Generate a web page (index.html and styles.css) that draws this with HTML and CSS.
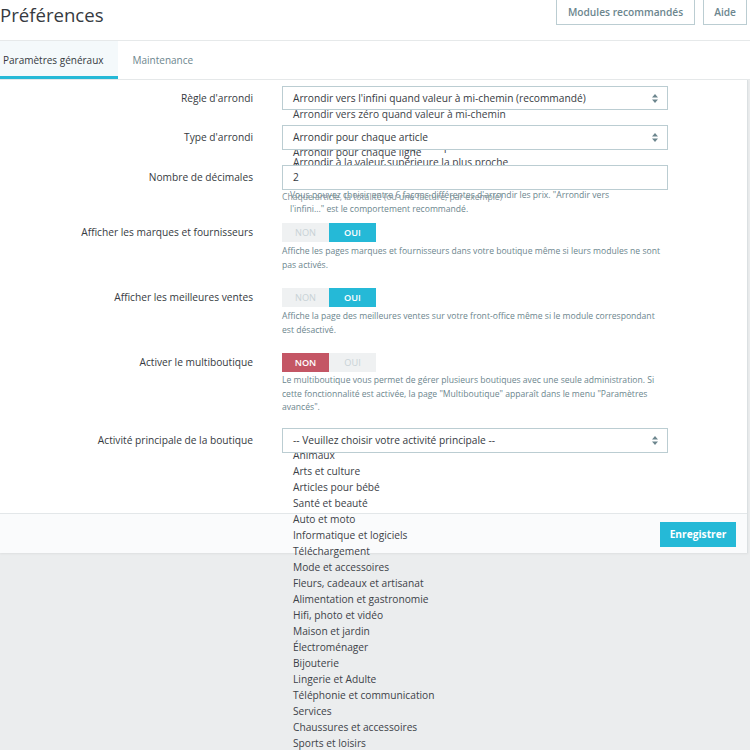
FILE: index.html
```html
<!DOCTYPE html>
<html lang="fr">
<head>
<meta charset="utf-8">
<title>Préférences</title>
<link rel="stylesheet" href="styles.css">
</head>
<body>
<header class="head">
  <div class="titlebar">
    <h1 class="title">Préférences</h1>
    <div class="tools">
      <button class="tool-btn">Modules recommandés</button>
      <button class="tool-btn">Aide</button>
    </div>
  </div>
  <nav class="tabs">
    <a class="tab active">Paramètres généraux</a>
    <a class="tab">Maintenance</a>
  </nav>
</header>

<main class="panel">
  <div class="form">
    <div class="row r1">
      <label class="lbl">Règle d'arrondi</label>
      <div class="ctl">
        <div class="select">Arrondir vers l'infini quand valeur à mi-chemin (recommandé)<svg class="caret" width="6" height="9" viewBox="0 0 6 9"><path d="M3 0 L6 3.5 H0 Z M3 9 L6 5.5 H0 Z" fill="#6c868e"/></svg></div>
        <ul class="opts">
          <li>Arrondir vers zéro quand valeur à mi-chemin</li>
          <li>Arrondir vers la valeur paire quand valeur à mi-chemin</li>
          <li>Arrondir vers la valeur impaire quand valeur à mi-chemin</li>
          <li>Arrondir à la valeur supérieure la plus proche</li>
          <li>Arrondir à la valeur inférieure la plus proche</li>
        </ul>
      </div>
    </div>

    <div class="row r2">
      <label class="lbl">Type d'arrondi</label>
      <div class="ctl">
        <div class="select">Arrondir pour chaque article<svg class="caret" width="6" height="9" viewBox="0 0 6 9"><path d="M3 0 L6 3.5 H0 Z M3 9 L6 5.5 H0 Z" fill="#6c868e"/></svg></div>
        <ul class="opts">
          <li>Arrondir pour chaque ligne</li>
          <li>Arrondir sur le total</li>
        </ul>
      </div>
    </div>

    <div class="row r3">
      <label class="lbl">Nombre de décimales</label>
      <div class="ctl">
        <div class="input">2</div>
        <div class="stack-help">
          <p class="sh sh-a">Vous pouvez choisir entre 6 façons différentes d'arrondir les prix. "Arrondir vers<br>l'infini..." est le comportement recommandé.</p>
          <p class="sh sh-b">Chaque article, la totalité (ou une facture, par exemple)</p>
        </div>
      </div>
    </div>

    <div class="row r4">
      <label class="lbl">Afficher les marques et fournisseurs</label>
      <div class="ctl">
        <div class="switch"><span class="sw-off">NON</span><span class="sw-on">OUI</span></div>
        <p class="help">Affiche les pages marques et fournisseurs dans votre boutique même si leurs modules ne sont pas activés.</p>
      </div>
    </div>

    <div class="row r5">
      <label class="lbl">Afficher les meilleures ventes</label>
      <div class="ctl">
        <div class="switch"><span class="sw-off">NON</span><span class="sw-on">OUI</span></div>
        <p class="help">Affiche la page des meilleures ventes sur votre front-office même si le module correspondant est désactivé.</p>
      </div>
    </div>

    <div class="row r6">
      <label class="lbl">Activer le multiboutique</label>
      <div class="ctl">
        <div class="switch"><span class="sw-no">NON</span><span class="sw-off">OUI</span></div>
        <p class="help help3">Le multiboutique vous permet de gérer plusieurs boutiques avec une seule administration. Si cette fonctionnalité est activée, la page "Multiboutique" apparaît dans le menu "Paramètres avancés".</p>
      </div>
    </div>

    <div class="row r7">
      <label class="lbl">Activité principale de la boutique</label>
      <div class="ctl">
        <div class="select">-- Veuillez choisir votre activité principale --<svg class="caret" width="6" height="9" viewBox="0 0 6 9"><path d="M3 0 L6 3.5 H0 Z M3 9 L6 5.5 H0 Z" fill="#6c868e"/></svg></div>
        <ul class="opts">
          <li>Animaux</li>
          <li>Arts et culture</li>
          <li>Articles pour bébé</li>
          <li>Santé et beauté</li>
          <li>Auto et moto</li>
          <li>Informatique et logiciels</li>
          <li>Téléchargement</li>
          <li>Mode et accessoires</li>
          <li>Fleurs, cadeaux et artisanat</li>
          <li>Alimentation et gastronomie</li>
          <li>Hifi, photo et vidéo</li>
          <li>Maison et jardin</li>
          <li>Électroménager</li>
          <li>Bijouterie</li>
          <li>Lingerie et Adulte</li>
          <li>Téléphonie et communication</li>
          <li>Services</li>
          <li>Chaussures et accessoires</li>
          <li>Sports et loisirs</li>
        </ul>
      </div>
    </div>
  </div>
  <div class="footer">
    <button class="save">Enregistrer</button>
  </div>
</main>
</body>
</html>
```

FILE: styles.css
```css
* { box-sizing: border-box; }
html { overflow: hidden; }
html, body { margin: 0; padding: 0; }
body {
  min-height: 750px;
  background: #ebedee;
  font-family: "Open Sans", "Noto Sans", sans-serif;
  color: #363a41;
}
.head { background: #fff; }
.titlebar {
  height: 41px;
  display: flex;
  justify-content: space-between;
  align-items: flex-start;
  border-bottom: 1px solid #e6e9ea;
}
.title {
  margin: 0;
  font-size: 18.6px;
  font-weight: 400;
  line-height: 30px;
  color: #363a41;
}
.tools { display: flex; gap: 8px; padding-right: 3px; margin-top: -1px; }
.tool-btn {
  height: 26px;
  border: 1px solid #bbcdd2;
  background: #fff;
  color: #6c868e;
  font-family: inherit;
  font-size: 10.2px;
  font-weight: 600;
  padding: 0 10px;
}
.tools .tool-btn:first-child { padding: 0 11px; }
.tabs {
  display: flex;
  height: 39px;
  margin-left: -12px;
  border-bottom: 1px solid #e6e9ea;
}
.tab {
  display: flex;
  align-items: center;
  padding: 0 14px 0 15px;
  font-size: 10px;
  color: #6c868e;
  border-bottom: 3px solid transparent;
  padding-top: 3px;
}
.tab.active {
  background: #f4f9fb;
  color: #363a41;
  border-bottom-color: #25b9d7;
}
.panel {
  width: 748px;
  background: #fff;
  border-right: 1px solid #dbe0e2;
  box-shadow: 0 1px 2px rgba(0,0,0,0.06);
}
.form { padding: 6px 0 60px; }
.row {
  display: grid;
  grid-template-columns: 253px 386px;
  column-gap: 29px;
  align-items: start;
}
.lbl {
  text-align: right;
  font-size: 10.2px;
  line-height: 24px;
  color: #363a41;
}
.ctl { position: relative; }
.select, .input {
  position: relative;
  z-index: 2;
  height: 24px;
  border: 1px solid #bbcdd2;
  background: #fff;
  font-size: 10.2px;
  line-height: 22px;
  padding: 0 10px;
  color: #363a41;
  white-space: nowrap;
}
.r2 .select, .r3 .input, .r7 .select { height: 25px; line-height: 23px; }
.caret { position: absolute; right: 9px; top: 7px; }
.opts {
  position: absolute;
  z-index: 1;
  left: 11px;
  top: 19px;
  margin: 0;
  padding: 0;
  list-style: none;
  font-size: 10.2px;
  line-height: 16px;
  color: #3d4248;
  white-space: nowrap;
}
.r1 .opts { top: 20px; }
.r2 { margin-top: 15px; }
.r3 { margin-top: 15px; }
.r3 .lbl, .r7 .lbl { line-height: 25px; }
.stack-help {
  position: absolute;
  z-index: 1;
  top: 100%;
  left: 0;
  width: 400px;
}
.sh {
  position: absolute;
  margin: 0;
  font-size: 8.6px;
  color: #6c868e;
  white-space: nowrap;
}
.sh-a { left: 8px; top: -2px; line-height: 14px; }
.sh-b { left: 0; top: 0; line-height: 14px; color: #7d9197; }
.r4 { margin-top: 33px; }
.r4 .lbl, .r5 .lbl, .r6 .lbl { line-height: 19px; }
.switch {
  display: flex;
  width: 94px;
  height: 19px;
  font-size: 9.2px;
  font-weight: 600;
}
.switch span {
  flex: 1;
  display: flex;
  align-items: center;
  justify-content: center;
}
.sw-off { background: #eff1f2; color: #c8d2d6; font-weight: 400; }
.sw-on { background: #25b9d7; color: #fff; }
.sw-no { background: #c45665; color: #fff; }
.help {
  margin: 2px 0 0;
  font-size: 8.6px;
  line-height: 14px;
  color: #6c868e;
}
.help3 { line-height: 13.6px; }
.r5 { margin-top: 16px; }
.r6 { margin-top: 16px; }
.r7 { margin-top: 13px; }
.footer {
  height: 40px;
  background: #fafbfc;
  border-top: 1px solid #e3e7e9;
  display: flex;
  justify-content: flex-end;
  align-items: center;
  padding-right: 11px;
}
.save {
  height: 25px;
  width: 76px;
  border: none;
  background: #25b9d7;
  color: #fff;
  font-family: inherit;
  font-size: 10.2px;
  font-weight: 700;
  margin-top: 2px;
}
```
